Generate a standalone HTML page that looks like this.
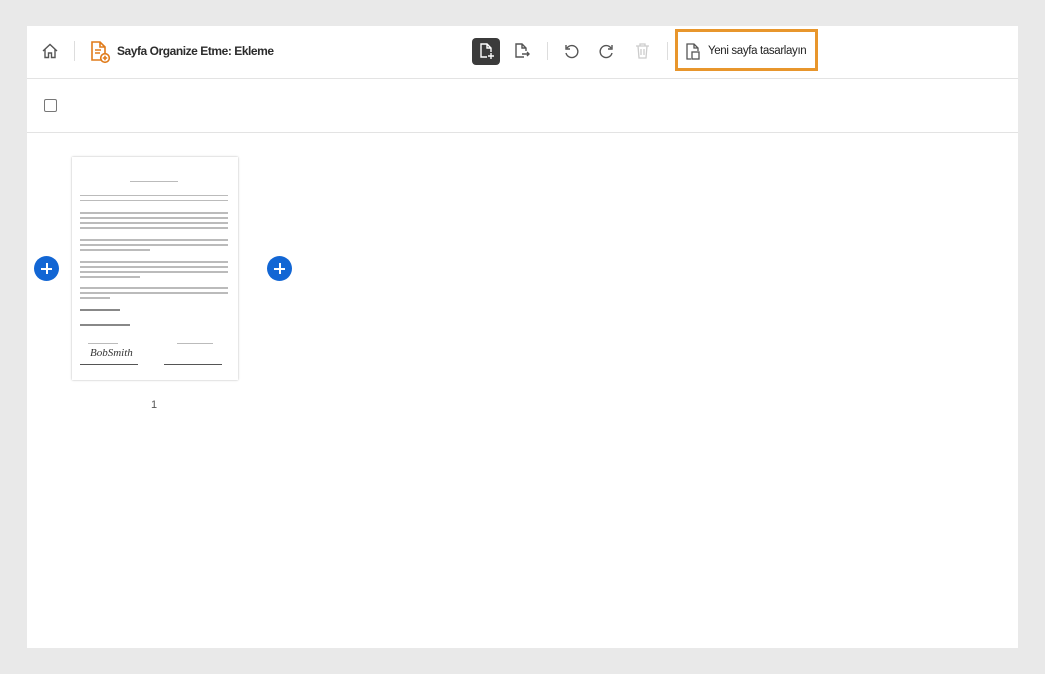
<!DOCTYPE html>
<html><head><style>
body{margin:0;width:1045px;height:674px;background:#e9e9e9;font-family:"Liberation Sans",sans-serif;position:relative;overflow:hidden}
.panel{position:absolute;left:27px;top:26px;width:991px;height:622px;background:#fff}
.abs{position:absolute}
.l{position:absolute;height:1px;background:#e3e3e3}
.plus{position:absolute;width:25px;height:25px;border-radius:50%;background:#1266d4}
.plus:before,.plus:after{content:"";position:absolute;background:#fff;left:7px;top:11.5px;width:11px;height:2px}
.plus:after{left:11.5px;top:7px;width:2px;height:11px}
.doc{position:absolute;left:72px;top:157px;width:166px;height:223px;background:#fff;box-shadow:0 0 2px rgba(0,0,0,.3)}
.tl{position:absolute;height:2px;background:#bbb;left:8px}
</style></head><body>
<div class="panel"></div>
<div class="l" style="left:27px;top:78px;width:991px"></div>
<div class="l" style="left:27px;top:132px;width:991px"></div>
<svg class="abs" style="left:41px;top:42px" width="18" height="18" viewBox="0 0 18 18" fill="none" stroke="#555" stroke-width="1.4"><path d="M2 9 L9 2.5 L16 9 M4 7.5 V15.5 H7.5 V11 H10.5 V15.5 H14 V7.5"/></svg>
<div class="abs" style="left:74px;top:41px;width:1px;height:20px;background:#ddd"></div>
<svg class="abs" style="left:89px;top:40px" width="22" height="24" viewBox="0 0 22 24" fill="none" stroke="#e07b1a" stroke-width="1.6"><path d="M13 20H3V2h8l5 5v6M11 2v5h5M6 10h6M6 13h5"/><circle cx="16" cy="18" r="4.3"/><path d="M16 15.8v4.4M13.8 18h4.4"/></svg>
<div class="abs" style="left:117px;top:44px;font-size:12px;font-weight:bold;color:#2c2c2c;letter-spacing:-0.45px">Sayfa Organize Etme: Ekleme</div>
<div class="abs" style="left:472px;top:38px;width:28px;height:27px;border-radius:4px;background:#3b3b3b"></div>
<svg class="abs" style="left:478px;top:42px" width="18" height="19" viewBox="0 0 18 19" fill="none" stroke="#fff" stroke-width="1.4"><path d="M9 15H3V2h6l4 4v4M9 2v4h4M13 11v6M10 14h6"/></svg>
<svg class="abs" style="left:513px;top:42px" width="18" height="19" viewBox="0 0 18 19" fill="none" stroke="#555" stroke-width="1.4"><path d="M11 15H3V2h6l4 4v3M9 2v4h4M9 12h7M14 10l2 2-2 2"/></svg>
<div class="abs" style="left:547px;top:42px;width:1px;height:18px;background:#ddd"></div>
<svg class="abs" style="left:563px;top:43px" width="17" height="17" viewBox="0 0 17 17" fill="none" stroke="#555" stroke-width="1.4"><path d="M4 5a6 6 0 1 1-1 5M3 2v4h4"/></svg>
<svg class="abs" style="left:598px;top:43px" width="17" height="17" viewBox="0 0 17 17" fill="none" stroke="#555" stroke-width="1.4"><path d="M13 5a6 6 0 1 0 1 5M14 2v4h-4"/></svg>
<svg class="abs" style="left:634px;top:42px" width="17" height="18" viewBox="0 0 17 18" fill="none" stroke="#ccc" stroke-width="1.3"><path d="M2 4h13M6 4V2h5v2M4 4l1 12h7l1-12M7 7v6M10 7v6"/></svg>
<div class="abs" style="left:667px;top:42px;width:1px;height:18px;background:#ddd"></div>
<div class="abs" style="left:675px;top:29px;border:3px solid #e8962c;width:137px;height:36px"></div>
<svg class="abs" style="left:685px;top:42px" width="16" height="19" viewBox="0 0 16 19" fill="none" stroke="#555" stroke-width="1.3"><path d="M6 17H2V2h7l4 4v3M9 2v4h4"/><rect x="7" y="10" width="7" height="7"/></svg>
<div class="abs" style="left:708px;top:45px;font-size:11.5px;color:#222;letter-spacing:-0.35px">Yeni sayfa tasarlayın</div>
<div class="abs" style="left:44px;top:99px;width:11px;height:11px;border:1.5px solid #777;border-radius:2px"></div>
<div class="doc">
<div class="tl" style="top:24px;left:58px;width:48px;height:1px"></div>
<div class="tl" style="top:38px;width:148px;height:1px"></div>
<div class="tl" style="top:43px;width:148px;height:1px"></div>
<div class="tl" style="top:55px;width:148px"></div><div class="tl" style="top:60px;width:148px"></div><div class="tl" style="top:65px;width:148px"></div><div class="tl" style="top:70px;width:148px"></div>
<div class="tl" style="top:82px;width:148px"></div><div class="tl" style="top:87px;width:148px"></div><div class="tl" style="top:92px;width:70px"></div>
<div class="tl" style="top:104px;width:148px"></div><div class="tl" style="top:109px;width:148px"></div><div class="tl" style="top:114px;width:148px"></div><div class="tl" style="top:119px;width:60px"></div>
<div class="tl" style="top:130px;width:148px"></div><div class="tl" style="top:135px;width:148px"></div><div class="tl" style="top:140px;width:30px"></div>
<div class="tl" style="top:152px;width:40px;background:#888"></div>
<div class="tl" style="top:167px;width:50px;background:#888"></div>
<div class="tl" style="top:186px;left:16px;width:30px;height:1px"></div>
<div class="tl" style="top:186px;left:105px;width:36px;height:1px"></div>
<div class="abs" style="left:18px;top:190px;font-size:11px;font-style:italic;color:#333;font-family:'Liberation Serif',serif">BobSmith</div>
<div class="tl" style="top:207px;width:58px;height:1px;background:#555"></div>
<div class="tl" style="top:207px;left:92px;width:58px;height:1px;background:#555"></div>
</div>
<div class="plus" style="left:34px;top:256px"></div>
<div class="plus" style="left:267px;top:256px"></div>
<div class="abs" style="left:151px;top:399px;font-size:11px;color:#555">1</div>
</body></html>
